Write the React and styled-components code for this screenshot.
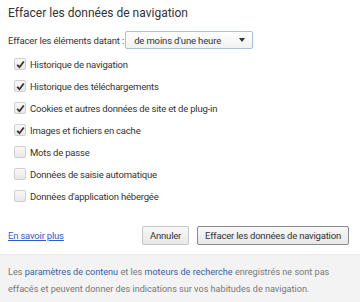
import React from "react";
import styled, { createGlobalStyle } from "styled-components";

const Global = createGlobalStyle`
  html, body { margin: 0; padding: 0; background: #fff; }
  body { font-family: Roboto, "Open Sans", sans-serif; }
`;

const Dialog = styled.div`
  width: 360px;
  height: 302px;
  display: flex;
  flex-direction: column;
  background: #fff;
  color: #333;
  overflow: hidden;
`;

const Main = styled.div`
  flex: 1;
  padding: 5px 11px 0 8px;
  display: flex;
  flex-direction: column;
`;

const Title = styled.div`
  font-size: 12px;
  line-height: 16px;
  color: #333;
`;

const PeriodRow = styled.div`
  margin-top: 10px;
  display: flex;
  align-items: center;
  gap: 1px;
  font-size: 9.5px;
  letter-spacing: -0.15px;
`;

const Select = styled.div`
  width: 128px;
  height: 18px;
  box-sizing: border-box;
  border: 1px solid #a9bfe0;
  border-radius: 2px;
  background: linear-gradient(#ffffff, #f1f1f1);
  display: flex;
  align-items: center;
  justify-content: space-between;
  padding: 0 7px 0 8px;
  color: #333;
  white-space: nowrap;
`;

const Caret = styled.span`
  width: 0;
  height: 0;
  border-left: 3.5px solid transparent;
  border-right: 3.5px solid transparent;
  border-top: 4px solid #333;
`;

const List = styled.div`
  margin-top: 4px;
  padding-left: 6px;
  display: flex;
  flex-direction: column;
`;

const Row = styled.label`
  height: 22px;
  display: flex;
  align-items: center;
  gap: 4px;
  font-size: 9.5px;
  letter-spacing: -0.2px;
  color: #333;
`;

const Box = styled.span`
  width: 12px;
  height: 12px;
  box-sizing: border-box;
  border: 1px solid #d0d0d0;
  border-radius: 2px;
  background: linear-gradient(#f8f8f8, #e8e8e8);
  display: flex;
  align-items: center;
  justify-content: center;
`;

const Actions = styled.div`
  margin-top: auto;
  margin-bottom: 9px;
  display: flex;
  align-items: center;
  gap: 8px;
`;

const Link = styled.a`
  font-size: 9.5px;
  letter-spacing: -0.2px;
  color: #2c5fc4;
  text-decoration: underline;
  margin-right: auto;
`;

const Button = styled.button`
  height: 19px;
  box-sizing: border-box;
  padding: 0 7px;
  font-family: inherit;
  font-size: 9.5px;
  letter-spacing: -0.2px;
  color: #333;
  border: 1px solid ${(p) => (p.$default ? "#8a8a8a" : "#c6c6c6")};
  border-radius: 2px;
  background: linear-gradient(#f8f8f8, #e8e8e8);
`;

const Footer = styled.div`
  height: 48px;
  box-sizing: border-box;
  background: #f3f3f3;
  border-top: 1px solid #e8e8e8;
  padding: 9px 8px 0 8px;
  font-size: 9.1px;
  line-height: 17px;
  color: #777;
  white-space: nowrap;
`;

const FootLink = styled.span`
  color: #2f5fb0;
`;

const Check = () => (
  <svg width="9" height="9" viewBox="0 0 9 9">
    <path d="M1.2 4.8 L3.5 7.2 L7.8 1.5" fill="none" stroke="#333" strokeWidth="1.8" />
  </svg>
);

const items = [
  ["Historique de navigation", true],
  ["Historique des téléchargements", true],
  ["Cookies et autres données de site et de plug-in", true],
  ["Images et fichiers en cache", true],
  ["Mots de passe", false],
  ["Données de saisie automatique", false],
  ["Données d'application hébergée", false],
];

export default function App() {
  return (
    <Dialog>
      <Global />
      <Main>
        <Title>Effacer les données de navigation</Title>
        <PeriodRow>
          <span>Effacer les éléments datant :</span>
          <Select>
            <span>de moins d'une heure</span>
            <Caret />
          </Select>
        </PeriodRow>
        <List>
          {items.map(([label, checked]) => (
            <Row key={label}>
              <Box>{checked && <Check />}</Box>
              <span>{label}</span>
            </Row>
          ))}
        </List>
        <Actions>
          <Link href="#">En savoir plus</Link>
          <Button>Annuler</Button>
          <Button $default>Effacer les données de navigation</Button>
        </Actions>
      </Main>
      <Footer>
        Les <FootLink>paramètres de contenu</FootLink> et les{" "}
        <FootLink>moteurs de recherche</FootLink> enregistrés ne sont pas
        <br />
        effacés et peuvent donner des indications sur vos habitudes de navigation.
      </Footer>
    </Dialog>
  );
}
